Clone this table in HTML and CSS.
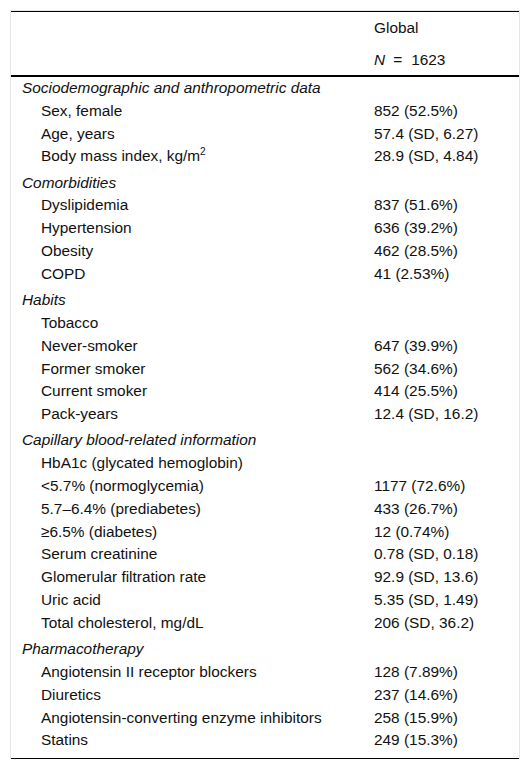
FILE: index.html
```html
<!DOCTYPE html>
<html lang="en">
<head>
	<meta charset="UTF-8">
	<meta name="viewport" content="width=device-width, initial-scale=1.0">
	<title>Baseline characteristics</title>
	<link rel="stylesheet" href="styles.css">
</head>
<body>
	<div class="table-wrap">
		<table class="data-table">
			<colgroup>
				<col class="col-label">
				<col class="col-value">
			</colgroup>
			<thead>
				<tr class="head-top">
					<th></th>
					<th>Global</th>
				</tr>
				<tr class="head-bottom">
					<th></th>
					<th><i>N</i><span class="eq">=</span>1623</th>
				</tr>
			</thead>
			<tbody>
				<tr class="section"><td colspan="2">Sociodemographic and anthropometric data</td></tr>
				<tr><td class="item">Sex, female</td><td>852 (52.5%)</td></tr>
				<tr><td class="item">Age, years</td><td>57.4 (SD, 6.27)</td></tr>
				<tr class="group-end"><td class="item">Body mass index, kg/m<sup>2</sup></td><td>28.9 (SD, 4.84)</td></tr>

				<tr class="section"><td colspan="2">Comorbidities</td></tr>
				<tr><td class="item">Dyslipidemia</td><td>837 (51.6%)</td></tr>
				<tr><td class="item">Hypertension</td><td>636 (39.2%)</td></tr>
				<tr><td class="item">Obesity</td><td>462 (28.5%)</td></tr>
				<tr class="group-end"><td class="item">COPD</td><td>41 (2.53%)</td></tr>

				<tr class="section"><td colspan="2">Habits</td></tr>
				<tr><td class="item">Tobacco</td><td></td></tr>
				<tr><td class="item">Never-smoker</td><td>647 (39.9%)</td></tr>
				<tr><td class="item">Former smoker</td><td>562 (34.6%)</td></tr>
				<tr><td class="item">Current smoker</td><td>414 (25.5%)</td></tr>
				<tr class="group-end"><td class="item">Pack-years</td><td>12.4 (SD, 16.2)</td></tr>

				<tr class="section"><td colspan="2">Capillary blood-related information</td></tr>
				<tr><td class="item">HbA1c (glycated hemoglobin)</td><td></td></tr>
				<tr><td class="item">&lt;5.7% (normoglycemia)</td><td>1177 (72.6%)</td></tr>
				<tr><td class="item">5.7–6.4% (prediabetes)</td><td>433 (26.7%)</td></tr>
				<tr><td class="item">≥6.5% (diabetes)</td><td>12 (0.74%)</td></tr>
				<tr><td class="item">Serum creatinine</td><td>0.78 (SD, 0.18)</td></tr>
				<tr><td class="item">Glomerular filtration rate</td><td>92.9 (SD, 13.6)</td></tr>
				<tr><td class="item">Uric acid</td><td>5.35 (SD, 1.49)</td></tr>
				<tr class="group-end"><td class="item">Total cholesterol, mg/dL</td><td>206 (SD, 36.2)</td></tr>

				<tr class="section"><td colspan="2">Pharmacotherapy</td></tr>
				<tr><td class="item">Angiotensin II receptor blockers</td><td>128 (7.89%)</td></tr>
				<tr><td class="item">Diuretics</td><td>237 (14.6%)</td></tr>
				<tr><td class="item">Angiotensin-converting enzyme inhibitors</td><td>258 (15.9%)</td></tr>
				<tr class="last"><td class="item">Statins</td><td>249 (15.3%)</td></tr>
			</tbody>
		</table>
	</div>
</body>
</html>
```

FILE: styles.css
```css
body {
	margin: 10px;
	font-family: "Liberation Sans", Arial, sans-serif;
	font-size: 15.4px;
	color: #111;
	background: #fff;
}

.table-wrap {
	border: 1px solid #e6e6e6;
	border-bottom: none;
}

.data-table {
	width: 100%;
	border-collapse: collapse;
	table-layout: fixed;
	border-top: 1px solid #000;
	border-bottom: 1px solid #000;
}

.col-label {
	width: 363px;
}

.data-table th {
	font-weight: normal;
	text-align: left;
	padding: 0;
}

.head-top th {
	height: 32px;
	line-height: 32px;
}

.head-bottom th {
	height: 31px;
	line-height: 31px;
	border-bottom: 2px solid #000;
}

.eq {
	margin: 0 9px 0 8px;
}

.data-table td {
	padding: 0;
	line-height: 22.8px;
	white-space: nowrap;
}

.section td {
	padding-left: 11px;
	font-style: italic;
}

.data-table td.item {
	padding-left: 30px;
}

.group-end td {
	padding-bottom: 3.5px;
}

.last td {
	padding-bottom: 5.5px;
}

sup {
	font-size: 10px;
	line-height: 0;
}
```
